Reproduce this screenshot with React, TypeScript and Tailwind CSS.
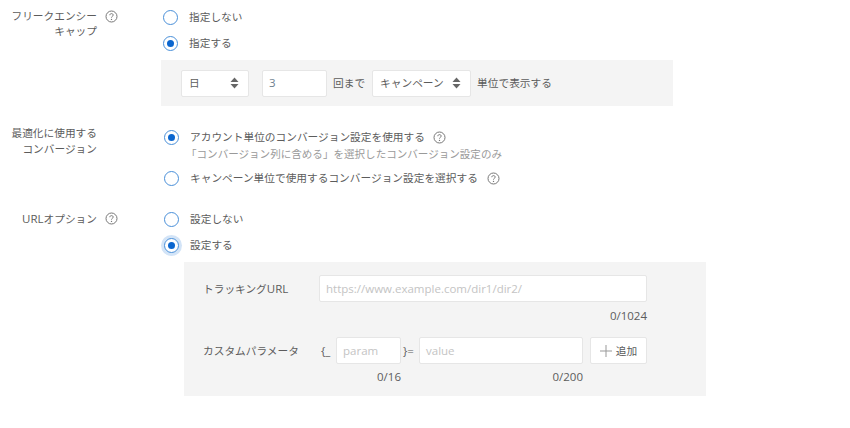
import React from 'react';

const Help = () => (
  <svg width="13" height="13" viewBox="0 0 13 13" fill="none" className="shrink-0">
    <circle cx="6.5" cy="6.5" r="5.5" stroke="#777" strokeWidth="1" />
    <path d="M4.8 5.2c0-1 .8-1.6 1.7-1.6s1.7.6 1.7 1.5c0 1.2-1.7 1.2-1.7 2.5" stroke="#777" strokeWidth="1" />
    <circle cx="6.5" cy="9.4" r=".7" fill="#777" />
  </svg>
);

const Radio = ({ checked, focus }: { checked?: boolean; focus?: boolean }) => (
  <span
    className={`flex w-[15px] h-[15px] shrink-0 items-center justify-center rounded-full border border-[#4a90d9] bg-white ${
      focus ? 'shadow-[0_0_0_3px_#d3e4f7]' : ''
    }`}
  >
    {checked && <span className="w-[7px] h-[7px] rounded-full bg-[#0b66cf]" />}
  </span>
);

const RadioRow = ({ checked, focus, label, help, helpClass, className }: { checked?: boolean; focus?: boolean; label: string; help?: boolean; helpClass?: string; className?: string }) => (
  <div className={`flex items-center h-[16px] ${className ?? ''}`}>
    <Radio checked={checked} focus={focus} />
    <span className="ml-[11px]">{label}</span>
    {help && <span className={helpClass ?? 'ml-[9px]'}><Help /></span>}
  </div>
);

const Select = ({ label, className }: { label: string; className: string }) => (
  <div className={`flex items-center justify-between h-[27px] bg-white border border-[#e6e6e6] rounded-[2px] pl-[7px] pr-[9px] ${className}`}>
    <span>{label}</span>
    <svg width="9" height="12" viewBox="0 0 9 12" fill="#666">
      <path d="M4.5 0.5 8.5 5H.5z" />
      <path d="M4.5 11.5 8.5 7H.5z" />
    </svg>
  </div>
);

const Input = ({ placeholder, value, className }: { placeholder?: string; value?: string; className: string }) => (
  <div className={`flex items-center h-[27px] bg-white border border-[#e6e6e6] rounded-[2px] px-[6px] text-[11.5px] ${value ? 'text-[#6f7f8f]' : 'text-[#c4c4c4]'} ${className}`}>
    {value ?? placeholder}
  </div>
);

export default function App() {
  return (
    <div className="w-[850px] h-[428px] bg-white text-[#5c5c5c] text-[10.7px] leading-[16px] font-['Open_Sans','Noto_Sans_CJK_JP',sans-serif] overflow-hidden">
      {/* frequency cap */}
      <section className="flex pt-[9px]">
        <div className="w-[163px] shrink-0 flex items-start">
          <div className="w-[97px] text-right shrink-0 leading-[15px]">
            フリークエンシー
            <br />
            キャップ
          </div>
          <span className="ml-[8px] mt-[1px]"><Help /></span>
        </div>
        <div>
          <RadioRow label="指定しない" />
          <RadioRow checked label="指定する" className="mt-[10px]" />
          <div className="-ml-[2px] mt-[9px] w-[512px] h-[46px] bg-[#f4f4f4] flex items-center pl-[20px]">
            <Select label="日" className="w-[68px]" />
            <Input value="3" className="w-[65px] ml-[13px]" />
            <span className="ml-[6px]">回まで</span>
            <Select label="キャンペーン" className="w-[99px] ml-[7px]" />
            <span className="ml-[6px]">単位で表示する</span>
          </div>
        </div>
      </section>

      {/* conversion */}
      <section className="flex mt-[19px]">
        <div className="w-[164px] shrink-0">
          <div className="w-[97px] text-right">
            最適化に使用する
            <br />
            コンバージョン
          </div>
        </div>
        <div className="pt-[4px]">
          <RadioRow checked label="アカウント単位のコンバージョン設定を使用する" help helpClass="ml-[8px]" />
          <div className="ml-[22px] mt-[1px] text-[#9a9a9a] text-[10.55px]">「コンバージョン列に含める」を選択したコンバージョン設定のみ</div>
          <RadioRow label="キャンペーン単位で使用するコンバージョン設定を選択する" help className="mt-[8px]" />
        </div>
      </section>

      {/* url options */}
      <section className="flex mt-[25px]">
        <div className="w-[164px] shrink-0 flex items-start">
          <div className="w-[97px] text-right shrink-0">
            <span className="text-[11.5px]">URL</span>オプション
          </div>
          <span className="ml-[8px] mt-[1px]"><Help /></span>
        </div>
        <div>
          <RadioRow label="設定しない" />
          <RadioRow checked focus label="設定する" className="mt-[10px]" />
          <div className="ml-[20px] mt-[9px] w-[522px] h-[134px] bg-[#f4f4f4] pl-[19px] pt-[13px]">
            <div className="flex items-center">
              <span className="w-[116px]">
                トラッキング<span className="text-[11.5px]">URL</span>
              </span>
              <Input placeholder="https://www.example.com/dir1/dir2/" className="w-[328px]" />
            </div>
            <div className="w-[444px] text-right mt-[6px] text-[11.5px]">0/1024</div>
            <div className="flex items-center mt-[13px]">
              <span className="w-[118px]">カスタムパラメータ</span>
              <span className="w-[15px] text-[11.5px]">{'{_'}</span>
              <Input placeholder="param" className="w-[65px]" />
              <span className="w-[18px] pl-[2px] text-[11.5px]">{'}='}</span>
              <Input placeholder="value" className="w-[164px]" />
              <div className="ml-[7px] w-[57px] h-[27px] bg-white border border-[#e6e6e6] rounded-[2px] flex items-center justify-center gap-[4px]">
                <svg width="12" height="12" viewBox="0 0 12 12" stroke="#999" strokeWidth="1"><path d="M6 0v12M0 6h12" /></svg>
                追加
              </div>
            </div>
            <div className="flex mt-[5px] text-[11.5px]">
              <span className="w-[198px] text-right">0/16</span>
              <span className="w-[182px] text-right">0/200</span>
            </div>
          </div>
        </div>
      </section>
    </div>
  );
}
